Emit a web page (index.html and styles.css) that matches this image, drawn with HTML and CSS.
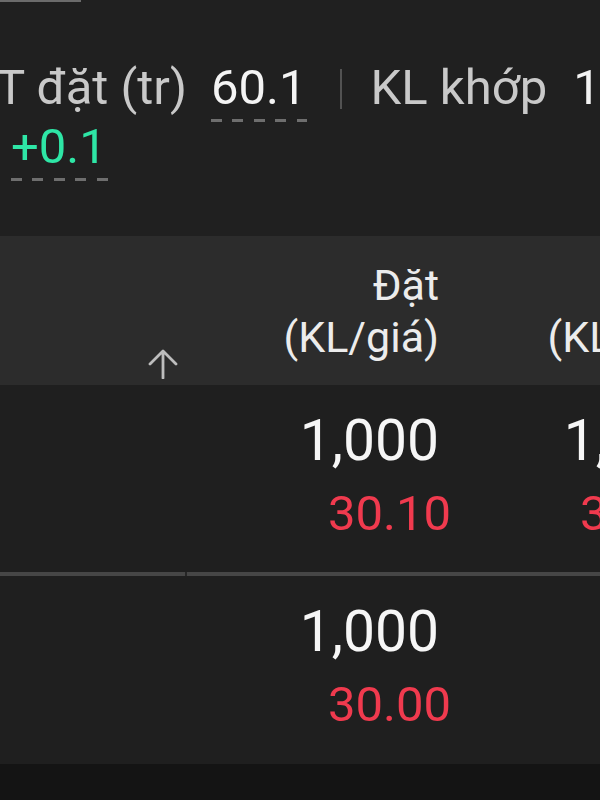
FILE: index.html
```html
<!DOCTYPE html>
<html lang="vi">
<head>
<meta charset="utf-8">
<link rel="stylesheet" href="styles.css">
</head>
<body>
<div class="screen">
  <div class="topbar"></div>
  <section class="summary">
    <div class="srow">
      <span class="label first">T đặt (tr)</span>
      <span class="value">60.1</span>
      <span class="sep"></span>
      <span class="label">KL khớp</span>
      <span class="value last">1</span>
    </div>
    <div class="srow second">
      <span class="value up">+0.1</span>
    </div>
  </section>
  <section class="table">
    <div class="thead">
      <div class="cell c1">
        <svg class="sort" width="30" height="30" viewBox="0 0 30 30" aria-hidden="true">
          <path d="M15 29V2.5M2 15L15 2L28 15" fill="none" stroke="#bdbdbd" stroke-width="2.8" stroke-linecap="round" stroke-linejoin="round"/>
        </svg>
      </div>
      <div class="cell num head">Đặt<br>(KL/giá)</div>
      <div class="cell num head">Khớp<br>(KL/giá)</div>
    </div>
    <div class="trow">
      <div class="cell c1"></div>
      <div class="cell num"><span class="qty">1,000</span><span class="price">30.10</span></div>
      <div class="cell num c3"><span class="qty">1,000</span><span class="price">30.10</span></div>
    </div>
    <div class="trow">
      <div class="cell c1"></div>
      <div class="cell num"><span class="qty">1,000</span><span class="price">30.00</span></div>
      <div class="cell num c3"></div>
    </div>
  </section>
</div>
</body>
</html>
```
FILE: styles.css
```css
html, body {
  margin: 0;
  padding: 0;
}
body {
  background: #141414;
  font-family: Roboto, "Noto Sans", sans-serif;
  width: 600px;
  height: 800px;
  overflow: hidden;
}
.screen {
  background: #202020;
  width: 600px;
}
.topbar {
  width: 81px;
  height: 2px;
  background: #6b6b6b;
}
.summary {
  display: flex;
  flex-direction: column;
  padding-top: 56px;
  padding-bottom: 60px;
  font-size: 49px;
}
.srow {
  display: flex;
  align-items: baseline;
  height: 59px;
  line-height: 59px;
  white-space: nowrap;
}
.srow > * {
  flex-shrink: 0;
}
.label {
  color: #c9c9c9;
}
.label.first {
  margin-left: -4px;
}
.value {
  color: #f4f4f4;
  margin-left: 24px;
  padding-bottom: 5px;
  background-image: repeating-linear-gradient(to right, #6e6e6e 0 11px, transparent 11px 21.5px);
  background-size: 100% 3px;
  background-position: left bottom;
  background-repeat: no-repeat;
}
.value.last {
  margin-left: 26px;
  background: none;
}
.value.up {
  color: #2ee6a6;
  margin-left: 11px;
  padding-right: 8px;
}
.sep {
  align-self: center;
  width: 2px;
  height: 40px;
  margin: 3px 29px 0 33px;
  background: #525252;
}
.table {
  width: 700px;
}
.thead, .trow {
  display: grid;
  grid-template-columns: 186px 253px 264px;
}
.thead {
  background: #2c2c2c;
  height: 149px;
}
.cell.num {
  text-align: right;
  white-space: nowrap;
}
.head {
  color: #ececec;
  font-size: 43px;
  line-height: 52px;
  padding-top: 23px;
}
.thead .c1 {
  display: flex;
  justify-content: flex-end;
  align-items: flex-end;
  padding: 0 8px 6px 0;
}
.sort {
  display: block;
}
.trow {
  background-color: #1f1f1f;
  background-image: linear-gradient(to right, #464646 0 185px, #262626 185px 187px, #464646 187px);
  background-size: 100% 4px;
  background-position: left bottom;
  background-repeat: no-repeat;
  height: 191px;
  box-sizing: border-box;
  padding-bottom: 4px;
}
.trow:last-child {
  background-image: none;
  height: 188px;
  padding-bottom: 0;
}
.trow .num {
  display: flex;
  flex-direction: column;
  align-items: flex-end;
  padding-top: 21px;
}
.qty {
  color: #f6f6f6;
  font-size: 57px;
  line-height: 70px;
}
.price {
  color: #f03a4e;
  font-size: 49px;
  line-height: 70px;
  margin-top: 3px;
  margin-right: -12px;
}
.c3 .price {
  margin-right: 0;
}
```
